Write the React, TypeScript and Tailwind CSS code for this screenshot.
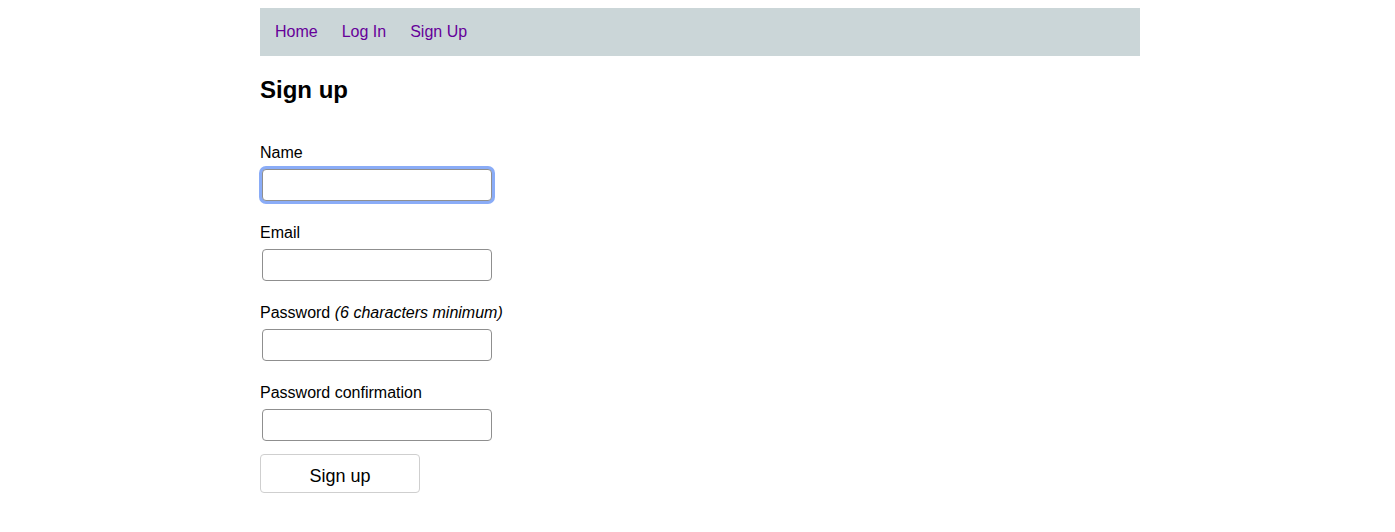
import React from "react";

const fields = [
  { label: "Name", hint: "", type: "text", focused: true },
  { label: "Email", hint: "", type: "email", focused: false },
  { label: "Password", hint: "(6 characters minimum)", type: "password", focused: false },
  { label: "Password confirmation", hint: "", type: "password", focused: false },
];

export default function App() {
  return (
    <div className="min-h-screen bg-white text-black font-['Liberation_Sans',Arial,sans-serif]">
      <div className="ml-[260px] w-[880px] pt-[8px]">
        {/* Top nav */}
        <nav className="flex h-[48px] items-center gap-[24px] bg-[#cbd6d8] px-[15px] text-[16px] leading-[18px]">
          <a href="#" className="text-[#660099]">Home</a>
          <a href="#" className="text-[#660099]">Log In</a>
          <a href="#" className="text-[#660099]">Sign Up</a>
        </nav>

        <h1 className="mt-[20px] text-[24px] font-bold leading-[28px]">Sign up</h1>

        {/* Form */}
        <form className="mt-[40px] flex flex-col">
          {fields.map((f, i) => (
            <div key={f.label} className={i > 0 ? "mt-[23px]" : ""}>
              <label className="block text-[16px] leading-[18px]">
                {f.label}
                {f.hint && <i> {f.hint}</i>}
              </label>
              <input
                type={f.type}
                className={
                  "ml-[2px] mt-[7px] block h-[32px] w-[230px] rounded-[4px] border border-[#8f8f8f] bg-white px-2 outline-none" +
                  (f.focused ? " ring-[3px] ring-[#8aacf7]" : "")
                }
              />
            </div>
          ))}
          <button
            type="button"
            className="mt-[13px] h-[39px] w-[160px] rounded-[4px] border border-[#cfcfcf] bg-white pt-[5px] text-[18px] leading-[22px]"
          >
            Sign up
          </button>
        </form>
      </div>
    </div>
  );
}
